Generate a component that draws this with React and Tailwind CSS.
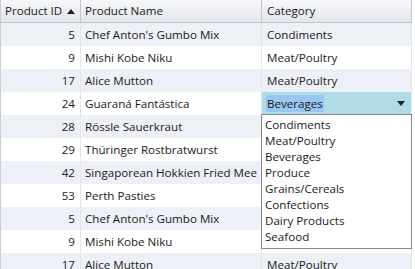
import { useState } from "react";

const rows = [
  [5, "Chef Anton's Gumbo Mix", "Condiments"],
  [9, "Mishi Kobe Niku", "Meat/Poultry"],
  [17, "Alice Mutton", "Meat/Poultry"],
  [24, "Guaraná Fantástica", "Beverages"],
  [28, "Rössle Sauerkraut", "Dairy Products"],
  [29, "Thüringer Rostbratwurst", "Meat/Poultry"],
  [42, "Singaporean Hokkien Fried Mee", "Grains/Cereals"],
  [53, "Perth Pasties", "Meat/Poultry"],
  [5, "Chef Anton's Gumbo Mix", "Condiments"],
  [9, "Mishi Kobe Niku", "Meat/Poultry"],
  [17, "Alice Mutton", "Meat/Poultry"],
];

const categories = [
  "Condiments",
  "Meat/Poultry",
  "Beverages",
  "Produce",
  "Grains/Cereals",
  "Confections",
  "Dairy Products",
  "Seafood",
];

function App() {
  const [editing] = useState(3);

  return (
    <div className="relative w-[415px] h-[269px] overflow-hidden bg-white font-['Open_Sans',sans-serif] text-[11.6px] text-[#1b1b1b]">
      <div className="w-[412px] border-l border-[#c9ccd1]">
        {/* Header */}
        <div className="grid grid-cols-[80px_181px_150px] h-[23px] bg-gradient-to-b from-[#f7f8fa] to-[#e2e5ea] border-b border-[#c3c6cb]">
          <div className="flex items-center justify-between pl-[4px] pr-[4px] border-r border-[#c3c6cb]">
            <span>Product ID</span>
            <svg width="8" height="5" viewBox="0 0 8 5" className="mr-[1px]">
              <path d="M0 5 L4 0 L8 5 Z" fill="#222" />
            </svg>
          </div>
          <div className="flex items-center pl-[4px] border-r border-[#c3c6cb]">Product Name</div>
          <div className="flex items-center pl-[5px] border-r border-[#c3c6cb]">Category</div>
        </div>

        {/* Rows */}
        {rows.map((r, i) => (
          <div
            key={i}
            className={
              "grid grid-cols-[80px_181px_150px] h-[23px] " +
              (i % 2 === 0 ? "bg-[#edf0f6]" : "bg-white")
            }
          >
            <div className="flex items-center justify-end pr-[5px] border-r border-[#e3e6eb]">{r[0]}</div>
            <div className="flex items-center pl-[4px] border-r border-[#e3e6eb] whitespace-nowrap overflow-hidden">
              {r[1]}
            </div>
            {i === editing ? (
              <div className="flex items-center justify-between bg-[#b2dbe8] pl-[4px] pr-[6px] border-r border-[#e3e6eb]">
                <span className="bg-[#99c7ef] px-[1px] leading-[17px]">{r[2]}</span>
                <svg width="8" height="5" viewBox="0 0 8 5">
                  <path d="M0 0 L8 0 L4 5 Z" fill="#222" />
                </svg>
              </div>
            ) : (
              <div className="flex items-center pl-[5px] border-r border-[#e3e6eb]">{r[2]}</div>
            )}
          </div>
        ))}
      </div>

      {/* Dropdown list */}
      <div className="absolute left-[261px] top-[114px] w-[151px] h-[135px] bg-white border border-[#828790] pt-[2px] pl-[3px]">
        {categories.map((c) => (
          <div key={c} className="h-[16px] leading-[16px]">{c}</div>
        ))}
      </div>
    </div>
  );
}

export default App;
